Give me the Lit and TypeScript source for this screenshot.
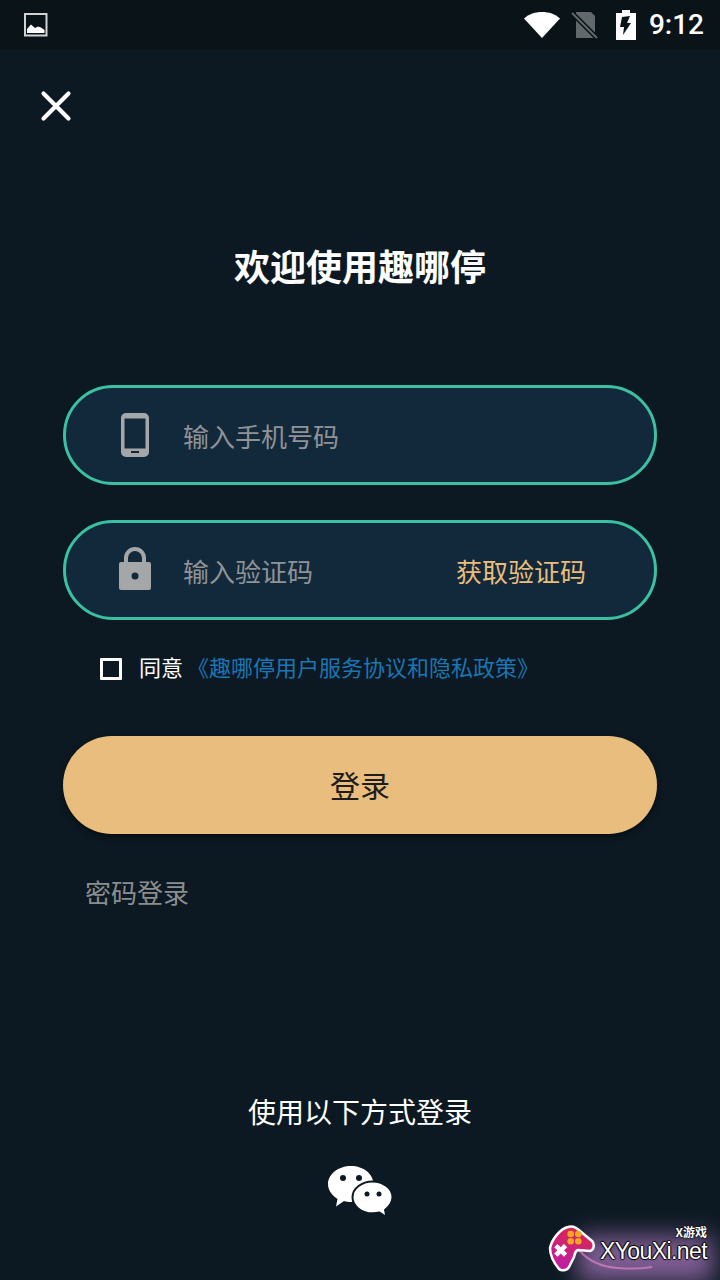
import { LitElement, css, html } from 'lit';
import { customElement } from 'lit/decorators.js';

@customElement('app-root')
export class AppRoot extends LitElement {
  render() {
    return html`
      <div class="page">
        <div class="status">
          <svg class="pic" width="26" height="26" viewBox="0 0 26 26">
            <rect x="2" y="2" width="21.5" height="21.5" fill="none" stroke="#d0d2d3" stroke-width="2" />
            <path d="M4 21v-4l4-4.500 4 3.500 3-1.500 3 1 3.500 2.500V21z" fill="#fff" />
          </svg>
          <div class="status-right">
            <svg width="36" height="28" viewBox="0 0 36 28">
              <path d="M18 27L0 7.500C5 3 11 1 18 1s13 2 18 6.500z" fill="#fff" />
            </svg>
            <svg class="sim" width="28" height="30" viewBox="0 0 28 30">
              <path d="M5 2h15l4 4v22H5z" fill="#62686b" />
              <path d="M1 3l25 25" stroke="#0a1318" stroke-width="5" />
              <path d="M1 3l25 25" stroke="#62686b" stroke-width="2" />
            </svg>
            <svg class="batt" width="22" height="32" viewBox="0 0 22 32">
              <path d="M7 1h8v3h6v27H1V4h6z" fill="#fff" />
              <path d="M15 7l-8 1-2 10h4l-1 8 8-12h-4z" fill="#0a1318" />
            </svg>
            <span class="time">9:12</span>
          </div>
        </div>

        <div class="close">
          <svg width="32" height="32" viewBox="0 0 32 32">
            <path d="M3.500 3.500l25 25M28.500 3.500l-25 25" stroke="#fff" stroke-width="4.200" stroke-linecap="round" />
          </svg>
        </div>

        <h1 class="title">欢迎使用趣哪停</h1>

        <div class="form">
          <div class="field">
            <svg class="field-icon" width="30" height="46" viewBox="0 0 30 46">
              <path fill-rule="evenodd" d="M6 1h18a5 5 0 0 1 5 5v34a5 5 0 0 1-5 5H6a5 5 0 0 1-5-5V6a5 5 0 0 1 5-5zM4.500 6.500v30h21v-30z" fill="#a5a6a8" />
              <rect x="11" y="39" width="8" height="2" fill="#12293b" />
            </svg>
            <span class="hint">输入手机号码</span>
          </div>
          <div class="field second">
            <svg class="field-icon lock" width="34" height="44" viewBox="0 0 34 44">
              <path fill-rule="evenodd" d="M3 16h3v-4a11 11 0 0 1 22 0v4h3a2 2 0 0 1 2 2v24a2 2 0 0 1-2 2H3a2 2 0 0 1-2-2V18a2 2 0 0 1 2-2zM10 16h14v-4a7 7 0 0 0-14 0z" fill="#a5a6a8" />
              <circle cx="17" cy="30" r="3.500" fill="#12293b" />
            </svg>
            <span class="hint">输入验证码</span>
            <span class="code">获取验证码</span>
          </div>

          <div class="agree">
            <span class="box"></span>
            <span class="agree-text">同意</span>
            <span class="link">《趣哪停用户服务协议和隐私政策》</span>
          </div>

          <div class="login">登录</div>
          <div class="pwd">密码登录</div>
        </div>

        <div class="other">使用以下方式登录</div>
        <svg class="wechat" width="66" height="54" viewBox="0 0 66 54">
          <path d="M24 1c12.500 0 22.500 8 22.500 18S36.500 37 24 37c-2.500 0-5-.3-7-1l-8 5.500 1.500-7.500C5 30.500 1 25 1 19 1 9 11.500 1 24 1z" fill="#fff" />
          <path d="M45.500 16.500c10.500 0 20 7 20 15.500 0 5.500-3 9.500-7.500 13l1.500 7-7-4.500c-2 .5-4.500.8-7 .8-10.500 0-20-7-20-16S35 16.500 45.500 16.500z" fill="#fff" stroke="#0c1923" stroke-width="2" />
          <circle cx="16" cy="13" r="3" fill="#0c1923" />
          <circle cx="32" cy="13" r="3" fill="#0c1923" />
          <circle cx="40" cy="29" r="2.500" fill="#0c1923" />
          <circle cx="52" cy="29" r="2.500" fill="#0c1923" />
        </svg>

        <div class="mark">
          <div class="glow"></div>
          <svg class="swoosh" width="172" height="58" viewBox="0 0 172 58">
            <path d="M30 27c10 12 24 18 40 19 12 1 22 1 34-1" fill="none" stroke="#f08ad0" stroke-width="2" opacity="0.6" />
          </svg>
          <svg class="pad" width="50" height="50" viewBox="0 0 50 50">
            <defs>
              <linearGradient id="padfill" x1="0.600" y1="0" x2="0.300" y2="1">
                <stop offset="0" stop-color="#d9264f" />
                <stop offset="1" stop-color="#c01ea8" />
              </linearGradient>
            </defs>
            <path d="M2 23C4 14 12 4 20 2c5-2 9 1 12 4l12 10c3 3 2 9-2 10l-12-1c-3 1-3 3-4 7l-5 10c-2 4-8 4-10 2C6 38 2 30 2 23z" fill="url(#padfill)" stroke="#fff" stroke-width="2.500" />
            <path d="M9.500 19l3.200 3.200 3.200-3.200 3.300 3.300-3.200 3 3.200 3.200-3.300 3.300-3.200-3.200-3.200 3.200-3.300-3.300 3.200-3.200-3.200-3z" fill="#fff" />
            <circle cx="22.700" cy="9" r="3.300" fill="#f5a623" />
            <circle cx="30.300" cy="9" r="3.300" fill="#f5a623" />
            <circle cx="22.700" cy="16.300" r="3.300" fill="#f5a623" />
            <circle cx="30.300" cy="16.300" r="3.300" fill="#f5a623" />
          </svg>
          <span class="mark-small">X游戏</span>
          <span class="mark-big">XYouXi.net</span>
        </div>
      </div>
    `;
  }

  static styles = css`
    :host {
      display: block;
      font-family: 'Noto Sans CJK SC', Roboto, 'Noto Sans', sans-serif;
    }

    .page {
      position: relative;
      width: 720px;
      height: 1280px;
      overflow: hidden;
      background: #0c1922;
      display: flex;
      flex-direction: column;
      align-items: center;
    }

    .status {
      align-self: stretch;
      height: 50px;
      flex: none;
      background: #0a1318;
      display: flex;
      align-items: center;
      justify-content: space-between;
      padding: 0 16px 0 23px;
    }

    .pic {
      display: block;
    }

    .status-right {
      display: flex;
      align-items: center;
    }

    .sim {
      margin-left: 11px;
    }

    .batt {
      margin-left: 16px;
    }

    .time {
      margin-left: 12px;
      font-family: Roboto, sans-serif;
      font-size: 28px;
      font-weight: 500;
      line-height: 50px;
      color: #fff;
    }

    .close {
      align-self: flex-start;
      margin: 40px 0 0 40px;
      height: 32px;
    }

    .close svg {
      display: block;
    }

    .title {
      margin: 119px 0 0;
      font-size: 36px;
      line-height: 48px;
      font-weight: 700;
      color: #fff;
    }

    .form {
      align-self: stretch;
      margin: 96px 63px 0;
    }

    .field {
      box-sizing: border-box;
      height: 100px;
      border: 3px solid #3bc0a2;
      border-radius: 50px;
      background: #12293b;
      display: flex;
      align-items: center;
      padding: 0 68px 0 54px;
    }

    .second {
      margin-top: 35px;
    }

    .field-icon {
      flex: none;
      display: block;
    }

    .lock {
      margin: -4px 0 0 -2px;
    }

    .hint {
      position: relative;
      font-size: 26px;
      line-height: 36px;
      color: #909295;
      margin-left: 33px;
      top: 1px;
    }

    .second .hint {
      margin-left: 31px;
    }

    .code {
      margin-left: auto;
      position: relative;
      top: 1px;
      font-size: 26px;
      line-height: 36px;
      color: #e9bd7d;
    }

    .agree {
      display: flex;
      align-items: center;
      margin: 30px 0 0 37px;
      height: 36px;
    }

    .box {
      box-sizing: border-box;
      width: 22px;
      height: 22px;
      margin-top: 1px;
      border: 3px solid #fff;
      border-radius: 1px;
    }

    .agree-text {
      position: relative;
      top: -2px;
      margin-left: 17px;
      font-size: 22px;
      color: #fff;
    }

    .link {
      position: relative;
      top: -2px;
      margin-left: 4px;
      font-size: 22px;
      color: #1a76b4;
    }

    .login {
      box-sizing: border-box;
      margin-top: 50px;
      height: 98px;
      padding-bottom: 3px;
      border-radius: 49px;
      background: #e9bd7d;
      box-shadow: 0 3px 6px rgba(0, 0, 0, 0.5);
      display: flex;
      align-items: center;
      justify-content: center;
      font-size: 30px;
      color: #1d1d1d;
    }

    .pwd {
      margin: 40px 0 0 22px;
      font-size: 26px;
      line-height: 36px;
      color: #8b8d8f;
    }

    .other {
      position: absolute;
      left: 0;
      right: 0;
      top: 1091px;
      text-align: center;
      font-size: 28px;
      line-height: 40px;
      color: #fff;
    }

    .wechat {
      position: absolute;
      left: 327px;
      top: 1165px;
    }

    .mark {
      position: absolute;
      left: 548px;
      top: 1222px;
      width: 172px;
      height: 58px;
    }

    .glow {
      position: absolute;
      left: 30px;
      top: 14px;
      width: 135px;
      height: 46px;
      background: rgba(205, 140, 225, 0.6);
      filter: blur(12px);
    }

    .swoosh {
      position: absolute;
      left: 0;
      top: 0;
    }

    .pad {
      position: absolute;
      left: 0;
      top: 3px;
    }

    .mark-small {
      position: absolute;
      right: 13px;
      top: 3px;
      font-size: 12px;
      line-height: 14px;
      font-weight: 700;
      color: #fff;
      text-shadow: 0 0 2px #000, 0 0 2px #000;
    }

    .mark-big {
      position: absolute;
      left: 52px;
      top: 18px;
      font-family: 'Liberation Sans', sans-serif;
      font-size: 23px;
      line-height: 22px;
      color: #fff;
      text-shadow: 1px 0 1px #000, -1px 0 1px #000, 0 1px 1px #000, 0 -1px 1px #000;
      letter-spacing: -0.600px;
    }
  `;
}
